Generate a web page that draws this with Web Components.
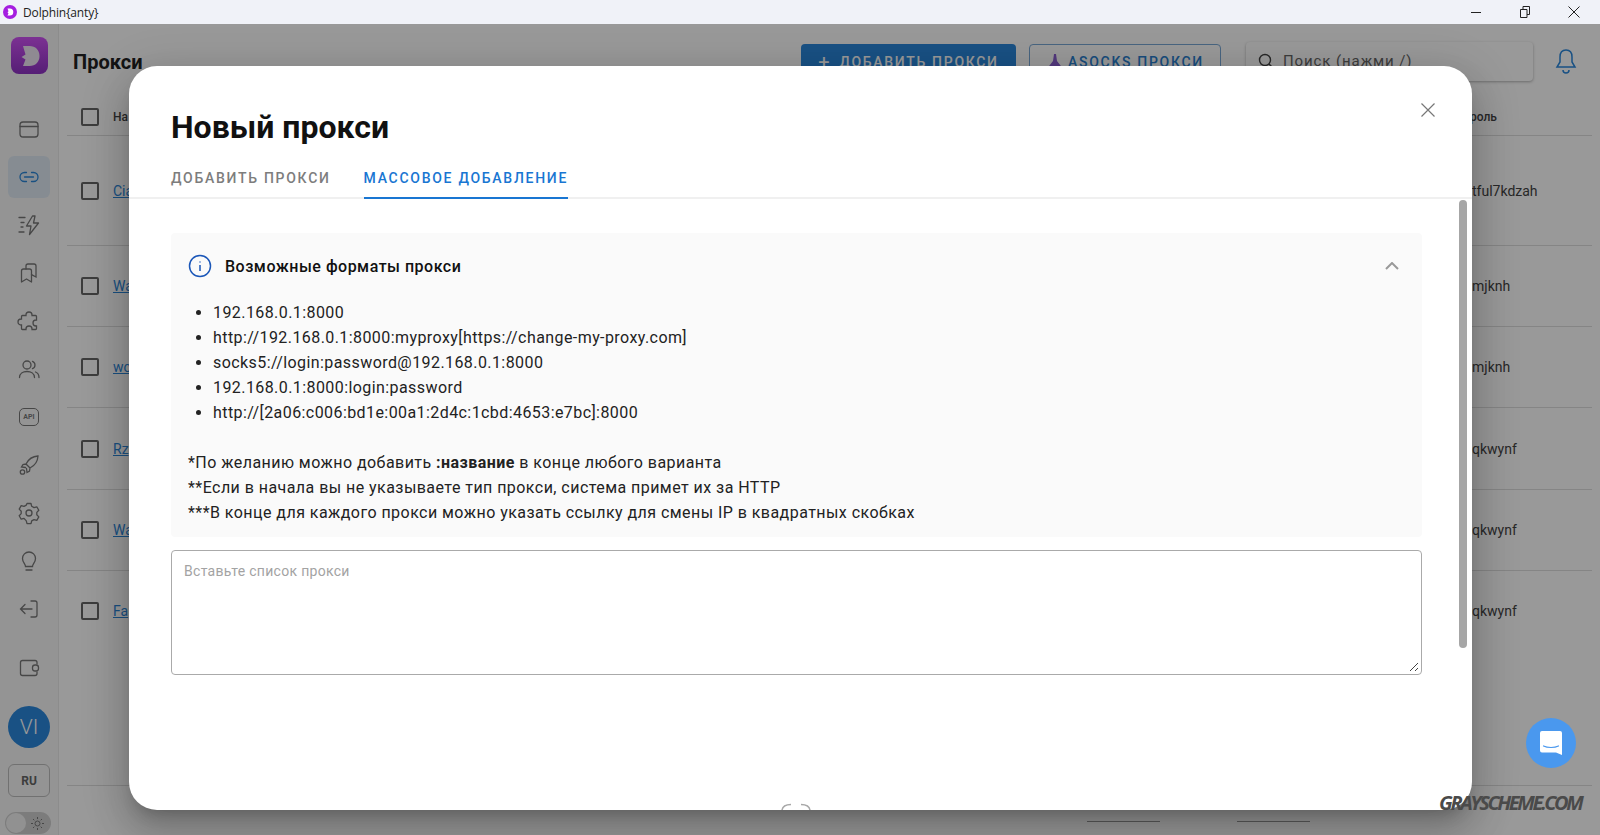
<!DOCTYPE html>
<html lang="ru">
<head>
<meta charset="utf-8">
<title>Dolphin{anty}</title>
<style>
    html, body {
        margin: 0;
        width: 1600px;
        height: 835px;
        overflow: hidden;
        font-family: Roboto, "Liberation Sans", sans-serif;
    }
</style>
</head>
<body>
<dolphin-app></dolphin-app>

<script>
const NAV_ICONS = {
    browser: '<rect x="3" y="5" width="18" height="15" rx="3"/><path d="M3 9.500h18"/>',
    link: '<path d="M9.500 7.500H7.500a4.500 4.500 0 0 0 0 9h2M14.500 7.500h2a4.500 4.500 0 0 1 0 9h-2M7.500 12h9"/>',
    flash: '<path d="M2 4.500h6M4 9.500h3M2 19h5M4 14h2M15.500 3 9.500 13h4.500l-1.500 8.500 9-11.500h-5l1.500-7z" stroke-linejoin="round"/>',
    bookmarks: '<path d="M4.500 10a2 2 0 0 1 2-2h6a2 2 0 0 1 2 2v11l-5-3-5 3z" stroke-linejoin="round"/><path d="M9 8V5a2 2 0 0 1 2-2h6a2 2 0 0 1 2 2v11l-4.500-2.400"/>',
    puzzle: '<path d="M9 6.500V6a3 3 0 0 1 6 0v.5h3.500a1 1 0 0 1 1 1V11H19a3 3 0 0 0 0 6h.5v2.500a1 1 0 0 1-1 1H15V20a3 3 0 0 0-6 0v.5H5.500a1 1 0 0 1-1-1V16H4a3 3 0 0 1 0-6h.5V7.500a1 1 0 0 1 1-1z"/>',
    users: '<circle cx="10" cy="8" r="4"/><path d="M2.500 20.500c0-4 3.500-6 7.500-6s7.500 2 7.500 6M15.500 4.300a4 4 0 0 1 0 7.400M18.500 15c2 .8 3.500 2.500 3.500 5.500"/>',
    rocket: '<path d="M21 3c-5 .3-9.500 3-12 8l4 4c5-2.500 7.700-7 8-12zM9 11l-3 .5-1.500 2.500 4 .5M13 15l-.5 3-2.500 1.500-.5-4"/><circle cx="5.500" cy="19" r="2.200"/>',
    gear: '<circle cx="12" cy="12" r="3"/><path d="M10 2.500h4l.7 2.800 2.300 1.300 2.800-.8 2 3.500-2 2.100v2.400l2 2.100-2 3.500-2.800-.8-2.300 1.300-.7 2.800h-4l-.7-2.800L7 17.400l-2.800.8-2-3.500 2-2.100v-2.400l-2-2.100 2-3.500 2.800.8 2.300-1.300z" stroke-linejoin="round"/>',
    bulb: '<path d="M8.500 17.500c0-2.500-3-4-3-8a6.500 6.500 0 0 1 13 0c0 4-3 5.500-3 8zM9 21h6"/>',
    exit: '<path d="M14 4h4a2 2 0 0 1 2 2v12a2 2 0 0 1-2 2h-4M15 12H4M8 7.500 3.500 12 8 16.500"/>',
    wallet: '<path d="M20 8V6.500A2 2 0 0 0 18 4.500H5.500a2 2 0 0 0-2 2v11a2 2 0 0 0 2 2H18a2 2 0 0 0 2-2V16"/><rect x="15.500" y="9" width="6" height="6" rx="2.500"/>'
};

class NavIcon extends HTMLElement {
    connectedCallback() {
        const name = this.getAttribute('name');
        const active = this.hasAttribute('active');
        this.attachShadow({ mode: "open" });
        this.shadowRoot.innerHTML = `
            <style>
                :host { display: flex; height: 48px; align-items: center; justify-content: center; }
                div {
                    width: 42px;
                    height: 42px;
                    display: flex;
                    align-items: center;
                    justify-content: center;
                    border-radius: 6px;
                    color: ${active ? '#2a86d8' : '#777'};
                    background: ${active ? '#e0eaf4' : 'transparent'};
                }
                svg { fill: none; stroke: currentColor; stroke-width: 1.300; stroke-linecap: round; }
                .api {
                    width: 18px;
                    height: 16px;
                    border: 1.300px solid #777;
                    border-radius: 5px;
                    font: 700 7px Roboto, sans-serif;
                    display: flex;
                    align-items: center;
                    justify-content: center;
                }
            </style>
            <div>${name === 'api'
                ? '<span class="api">API</span>'
                : `<svg width="24" height="24" viewBox="0 0 24 24">${NAV_ICONS[name]}</svg>`}</div>
        `;
    }
}

class TitleBar extends HTMLElement {
    constructor() {
        super();
        this.attachShadow({ mode: "open" });
        this.shadowRoot.innerHTML = `
            <style>
                :host {
                    display: flex;
                    align-items: center;
                    height: 24px;
                    background: #f0f2f8;
                    font: 12px "Open Sans", "Noto Sans", sans-serif;
                    color: #222;
                }
                .mark { margin-left: 3px; width: 14px; height: 14px; }
                .name { margin-left: 6px; flex: 1; letter-spacing: -.15px; }
                .btn { width: 49px; display: flex; justify-content: center; }
                svg.ctl { fill: none; stroke: #222; stroke-width: 1; }
            </style>
            <svg class="mark" viewBox="0 0 14 14">
                <circle cx="7" cy="7" r="7" fill="#a51ee0"/>
                <path d="M4.500 3.500h2.300a3.500 3.500 0 0 1 0 7H4.500l1-2-1-1.300 1-1z" fill="#fff"/>
            </svg>
            <span class="name">Dolphin{anty}</span>
            <span class="btn"><svg class="ctl" width="10" height="10"><path d="M0 5.500h10"/></svg></span>
            <span class="btn"><svg class="ctl" width="10" height="12"><path d="M.5 3.500h6.500v8H.5zM3 3.500V.5h6.500v8H7"/></svg></span>
            <span class="btn" style="margin-right:2px"><svg class="ctl" width="12" height="12"><path d="M.5.500l11 11M11.500.500l-11 11"/></svg></span>
        `;
    }
}

class SideBar extends HTMLElement {
    constructor() {
        super();
        this.attachShadow({ mode: "open" });
        this.shadowRoot.innerHTML = `
            <style>
                :host {
                    display: flex;
                    flex-direction: column;
                    box-sizing: border-box;
                    width: 59px;
                    flex: none;
                    background: #f7f7f7;
                    border-right: 1px solid #e9e9e9;
                    align-items: stretch;
                }
                .logo {
                    width: 37px;
                    height: 37px;
                    margin: 13px 0 31px 11px;
                    border-radius: 8px;
                    background: linear-gradient(180deg, #cf52f5, #8e32c4);
                    display: flex;
                    align-items: center;
                    justify-content: center;
                }
                .wallet { margin-top: 11px; }
                .avatar {
                    width: 42px;
                    height: 42px;
                    margin: 14px 0 0 8px;
                    border-radius: 50%;
                    background: #2a87dc;
                    color: #fff;
                    font-size: 21px;
                    font-weight: 300;
                    display: flex;
                    align-items: center;
                    justify-content: center;
                }
                .lang {
                    box-sizing: border-box;
                    width: 42px;
                    height: 33px;
                    margin: 16px 0 0 8px;
                    border: 1px solid #bdbdbd;
                    border-radius: 6px;
                    font-size: 12px;
                    font-weight: 700;
                    color: #666;
                    display: flex;
                    align-items: center;
                    justify-content: center;
                }
                .toggle {
                    box-sizing: border-box;
                    width: 46px;
                    height: 22px;
                    margin: 15px 0 0 5px;
                    border-radius: 11px;
                    background: #cfcfcf;
                    padding: 1px;
                    display: flex;
                    align-items: center;
                    justify-content: space-between;
                }
                .toggle i { width: 20px; height: 20px; border-radius: 50%; background: #f2f2f2; }
                .toggle svg { margin-right: 6px; fill: none; stroke: #777; }
            </style>
            <div class="logo">
                <svg width="22" height="24" viewBox="0 0 22 24">
                    <path d="M4 2h6.500c6 0 10 4 10 10s-4 10-10 10H4l2.500-6.500-4-2.500 4-2.500z" fill="#efe6f4"/>
                </svg>
            </div>
            <nav-icon name="browser"></nav-icon>
            <nav-icon name="link" active></nav-icon>
            <nav-icon name="flash"></nav-icon>
            <nav-icon name="bookmarks"></nav-icon>
            <nav-icon name="puzzle"></nav-icon>
            <nav-icon name="users"></nav-icon>
            <nav-icon name="api"></nav-icon>
            <nav-icon name="rocket"></nav-icon>
            <nav-icon name="gear"></nav-icon>
            <nav-icon name="bulb"></nav-icon>
            <nav-icon name="exit"></nav-icon>
            <nav-icon class="wallet" name="wallet"></nav-icon>
            <div class="avatar">VI</div>
            <div class="lang">RU</div>
            <div class="toggle">
                <i></i>
                <svg width="13" height="13" viewBox="0 0 13 13"><circle cx="6.500" cy="6.500" r="2.500"/><path d="M6.500 0v2M6.500 11v2M0 6.500h2M11 6.500h2M2 2l1.300 1.300M9.700 9.700 11 11M11 2 9.700 3.300M3.300 9.700 2 11"/></svg>
            </div>
        `;
    }
}

class ProxyRow extends HTMLElement {
    connectedCallback() {
        const height = this.getAttribute('height');
        const head = this.hasAttribute('head');
        const last = this.hasAttribute('last');
        this.attachShadow({ mode: "open" });
        this.shadowRoot.innerHTML = `
            <style>
                :host {
                    display: flex;
                    box-sizing: border-box;
                    align-items: center;
                    height: ${height}px;
                    border-bottom: 1px solid ${last ? 'transparent' : '#dedede'};
                    font-size: ${head ? 12 : 14}px;
                    font-weight: ${head ? 500 : 400};
                    color: #444;
                }
                .box {
                    box-sizing: border-box;
                    width: 18px;
                    height: 18px;
                    margin-left: 14px;
                    border: 2px solid #666;
                    border-radius: 2px;
                    flex: none;
                }
                .name { margin-left: 14px; flex: 1; }
                a { color: #2c86d8; text-decoration: underline; }
                .pass { box-sizing: border-box; width: 137px; padding-left: ${head ? 0 : 17}px; flex: none; }
            </style>
            <span class="box"></span>
            <span class="name">${head ? this.getAttribute('name') : `<a>${this.getAttribute('name')}</a>`}</span>
            <span class="pass">${this.getAttribute('pass')}</span>
        `;
    }
}

class ProxyPage extends HTMLElement {
    constructor() {
        super();
        this.attachShadow({ mode: "open" });
        this.shadowRoot.innerHTML = `
            <style>
                :host {
                    display: flex;
                    flex-direction: column;
                    flex: 1;
                    min-width: 0;
                    background: #fff;
                    padding: 0 8px 0 8px;
                }
                header {
                    display: flex;
                    align-items: center;
                    height: 74px;
                    flex: none;
                    padding-right: 15px;
                }
                h1 { margin: 2px 0 0 6px; font-size: 20px; font-weight: 700; color: #222; flex: 1; }
                .btn {
                    box-sizing: border-box;
                    height: 36px;
                    margin-top: 1px;
                    display: flex;
                    align-items: center;
                    justify-content: center;
                    gap: 8px;
                    border-radius: 4px;
                    font-size: 14px;
                    font-weight: 500;
                    letter-spacing: 1.700px;
                }
                .add { width: 215px; background: #2a87dc; color: #fff; }
                .asocks { width: 192px; margin-left: 13px; gap: 4px; border: 1px solid #7aa9d8; color: #2a7fd0; }
                .search {
                    box-sizing: border-box;
                    width: 287px;
                    height: 39px;
                    margin-left: 25px;
                    padding-left: 12px;
                    border-radius: 4px;
                    box-shadow: 0 1px 3px rgba(0,0,0,.3);
                    display: flex;
                    align-items: center;
                    gap: 9px;
                    color: #666;
                    font-size: 15px;
                    letter-spacing: .9px;
                }
                .bell { margin: 0 0 0 22px; fill: none; stroke: #2a87dc; stroke-width: 1.500; }
                .table { flex: 1; }
                footer {
                    box-sizing: border-box;
                    flex: none;
                    height: 50px;
                    border-top: 1px solid #dedede;
                    padding-top: 35px;
                    display: flex;
                    justify-content: flex-end;
                    gap: 77px;
                    padding-right: 282px;
                }
                footer i { width: 73px; height: 1px; background: #999; }
            </style>
            <header>
                <h1>Прокси</h1>
                <div class="btn add"><span style="font-size:20px;font-weight:400;line-height:1">+</span>ДОБАВИТЬ ПРОКСИ</div>
                <div class="btn asocks">
                    <svg width="18" height="18" viewBox="0 0 18 18"><path d="M8 1h2l1 7 7 9H0l7-9z" fill="#8a5fd0"/></svg>
                    ASOCKS ПРОКСИ
                </div>
                <div class="search">
                    <svg width="16" height="16" viewBox="0 0 16 16" fill="none" stroke="#444" stroke-width="1.400"><circle cx="7" cy="7" r="5.500"/><path d="m11 11 3.500 3.500"/></svg>
                    Поиск (нажми /)
                </div>
                <svg class="bell" width="22" height="26" viewBox="0 0 22 26"><path d="M11 2c-4 0-6 3-6 7v5l-3 5h18l-3-5V9c0-4-2-7-6-7zM8 22a3 3 0 0 0 6 0"/></svg>
            </header>
            <div class="table">
                <proxy-row head height="38" name="На" pass="Пароль"></proxy-row>
                <proxy-row height="110" name="Cia" pass="tful7kdzah"></proxy-row>
                <proxy-row height="81" name="Wa" pass="mjknh"></proxy-row>
                <proxy-row height="81" name="wc" pass="mjknh"></proxy-row>
                <proxy-row height="82" name="Rz" pass="qkwynf"></proxy-row>
                <proxy-row height="81" name="Wa" pass="qkwynf"></proxy-row>
                <proxy-row last height="81" name="Fa" pass="qkwynf"></proxy-row>
            </div>
            <footer><i></i><i></i></footer>
        `;
    }
}

class ModalTabs extends HTMLElement {
    constructor() {
        super();
        this.attachShadow({ mode: "open" });
        this.shadowRoot.innerHTML = `
            <style>
                :host {
                    display: flex;
                    gap: 33px;
                    padding-left: 42px;
                    border-bottom: 2px solid #f0f0f0;
                    font-size: 14px;
                    font-weight: 500;
                    letter-spacing: 1.720px;
                    color: #7d7d7d;
                }
                span { padding: 6px 0 11px; margin-bottom: -2px; border-bottom: 2px solid transparent; line-height: 16px; }
                .on { color: #1976d2; border-bottom-color: #1976d2; }
            </style>
            <span>ДОБАВИТЬ ПРОКСИ</span>
            <span class="on">МАССОВОЕ ДОБАВЛЕНИЕ</span>
        `;
    }
}

class FormatPanel extends HTMLElement {
    constructor() {
        super();
        this.attachShadow({ mode: "open" });
        this.shadowRoot.innerHTML = `
            <style>
                :host {
                    display: block;
                    box-sizing: border-box;
                    height: 304px;
                    background: #fafafa;
                    border-radius: 4px;
                    padding: 20px 17px 0 17px;
                    color: #222;
                    font-size: 16px;
                    line-height: 25px;
                    letter-spacing: .42px;
                }
                .head { display: flex; align-items: center; height: 26px; gap: 13px; font-weight: 500; color: #111; letter-spacing: .5px; }
                .head span { flex: 1; }
                .head svg { fill: none; }
                ul { margin: 21px 0 25px; padding-left: 25px; }
                p { margin: 0; letter-spacing: .45px; }
                b { font-weight: 700; }
            </style>
            <div class="head">
                <svg width="24" height="24" viewBox="0 0 24 24" stroke="#1a56b8" stroke-width="1.500">
                    <circle cx="12" cy="12" r="10.500"/><path d="M12 11v6M12 7.500v1"/>
                </svg>
                <span>Возможные форматы прокси</span>
                <svg width="14" height="8" viewBox="0 0 14 8" stroke="#999" stroke-width="2" style="margin-right:6px"><path d="m1 7 6-6 6 6"/></svg>
            </div>
            <ul>
                <li>192.168.0.1:8000</li>
                <li>http://192.168.0.1:8000:myproxy[https://change-my-proxy.com]</li>
                <li>socks5://login:password@192.168.0.1:8000</li>
                <li>192.168.0.1:8000:login:password</li>
                <li>http://[2a06:c006:bd1e:00a1:2d4c:1cbd:4653:e7bc]:8000</li>
            </ul>
            <p>*По желанию можно добавить <b>:название</b> в конце любого варианта</p>
            <p>**Если в начала вы не указываете тип прокси, система примет их за HTTP</p>
            <p>***В конце для каждого прокси можно указать ссылку для смены IP в квадратных скобках</p>
        `;
    }
}

class ProxyModal extends HTMLElement {
    constructor() {
        super();
        this.attachShadow({ mode: "open" });
        this.shadowRoot.innerHTML = `
            <style>
                :host {
                    position: absolute;
                    left: 129px;
                    top: 66px;
                    width: 1343px;
                    height: 744px;
                    box-sizing: border-box;
                    background: #fff;
                    border-radius: 28px;
                    overflow: hidden;
                    display: flex;
                    flex-direction: column;
                }
                h2 {
                    margin: 0;
                    padding: 41px 42px 0;
                    font-size: 32px;
                    line-height: 40px;
                    font-weight: 700;
                    color: #111;
                }
                .close { position: absolute; left: 1292px; top: 37px; fill: none; stroke: #777; stroke-width: 1.200; }
                modal-tabs { margin-top: 17px; }
                .body { flex: 1; position: relative; padding: 34px 50px 0 42px; }
                .bar {
                    position: absolute;
                    right: 5px;
                    top: 1px;
                    width: 8px;
                    height: 448px;
                    border-radius: 4px;
                    background: #a6a6a6;
                }
                .field {
                    position: relative;
                    box-sizing: border-box;
                    height: 125px;
                    margin-top: 13px;
                    border: 1px solid #aaa;
                    border-radius: 4px;
                    padding: 9px 12px;
                    font-size: 14px;
                    line-height: 22px;
                    letter-spacing: .3px;
                    color: #a3a3a3;
                }
                .grip { position: absolute; right: 2px; bottom: 2px; fill: none; stroke: #444; }
                .spin { position: absolute; left: 652px; bottom: 0; fill: none; stroke: #a8a8a8; stroke-width: 1.500; }
            </style>
            <h2>Новый прокси</h2>
            <svg class="close" width="14" height="14" viewBox="0 0 14 14"><path d="m.5.500 13 13M13.500.500l-13 13"/></svg>
            <modal-tabs></modal-tabs>
            <div class="body">
                <div class="bar"></div>
                <format-panel></format-panel>
                <div class="field">
                    Вставьте список прокси
                    <svg class="grip" width="10" height="10" viewBox="0 0 10 10"><path d="m1 9 8-8M6 9l3-3"/></svg>
                </div>
            </div>
            <svg class="spin" width="30" height="7" viewBox="0 0 30 7"><path d="M1 7c.5-3 3-5.500 9-5.500M20 1.500c6 0 8.500 2.500 9 5.500"/></svg>
        `;
    }
}

class ChatLauncher extends HTMLElement {
    constructor() {
        super();
        this.attachShadow({ mode: "open" });
        this.shadowRoot.innerHTML = `
            <style>
                :host {
                    position: absolute;
                    left: 1526px;
                    top: 718px;
                    width: 50px;
                    height: 50px;
                    border-radius: 50%;
                    background: #4a98ee;
                    display: flex;
                    align-items: center;
                    justify-content: center;
                }
            </style>
            <svg width="24" height="26" viewBox="0 0 24 26">
                <path d="M3 1h18a2 2 0 0 1 2 2v22l-6-2.500H3a2 2 0 0 1-2-2V3a2 2 0 0 1 2-2z" fill="#fff"/>
                <path d="M4.500 16c4 2 11 2 15 0" fill="none" stroke="#4a98ee" stroke-width="1.200" stroke-linecap="round"/>
            </svg>
        `;
    }
}

class DolphinApp extends HTMLElement {
    constructor() {
        super();
        this.attachShadow({ mode: "open" });
        this.shadowRoot.innerHTML = `
            <style>
                :host {
                    display: flex;
                    flex-direction: column;
                    position: relative;
                    width: 1600px;
                    height: 835px;
                    overflow: hidden;
                }
                main { flex: 1; display: flex; min-height: 0; }
                .scrim { position: absolute; left: 0; right: 0; top: 24px; bottom: 0; background: rgba(0,0,0,.4); }
                proxy-modal {
                    box-shadow: 0 11px 15px -7px rgba(0,0,0,.2), 0 24px 38px 3px rgba(0,0,0,.14), 0 9px 46px 8px rgba(0,0,0,.12);
                }
                .mark {
                    position: absolute;
                    left: 1439px;
                    top: 789px;
                    font: italic 700 20px "Open Sans", sans-serif;
                    letter-spacing: -2.400px;
                    color: #4a4a4a;
                }
            </style>
            <title-bar></title-bar>
            <main>
                <side-bar></side-bar>
                <proxy-page></proxy-page>
            </main>
            <div class="scrim"></div>
            <proxy-modal></proxy-modal>
            <chat-launcher></chat-launcher>
            <div class="mark">GRAYSCHEME.COM</div>
        `;
    }
}

customElements.define("nav-icon", NavIcon);
customElements.define("title-bar", TitleBar);
customElements.define("side-bar", SideBar);
customElements.define("proxy-row", ProxyRow);
customElements.define("proxy-page", ProxyPage);
customElements.define("modal-tabs", ModalTabs);
customElements.define("format-panel", FormatPanel);
customElements.define("proxy-modal", ProxyModal);
customElements.define("chat-launcher", ChatLauncher);
customElements.define("dolphin-app", DolphinApp);
</script>
</body>
</html>
